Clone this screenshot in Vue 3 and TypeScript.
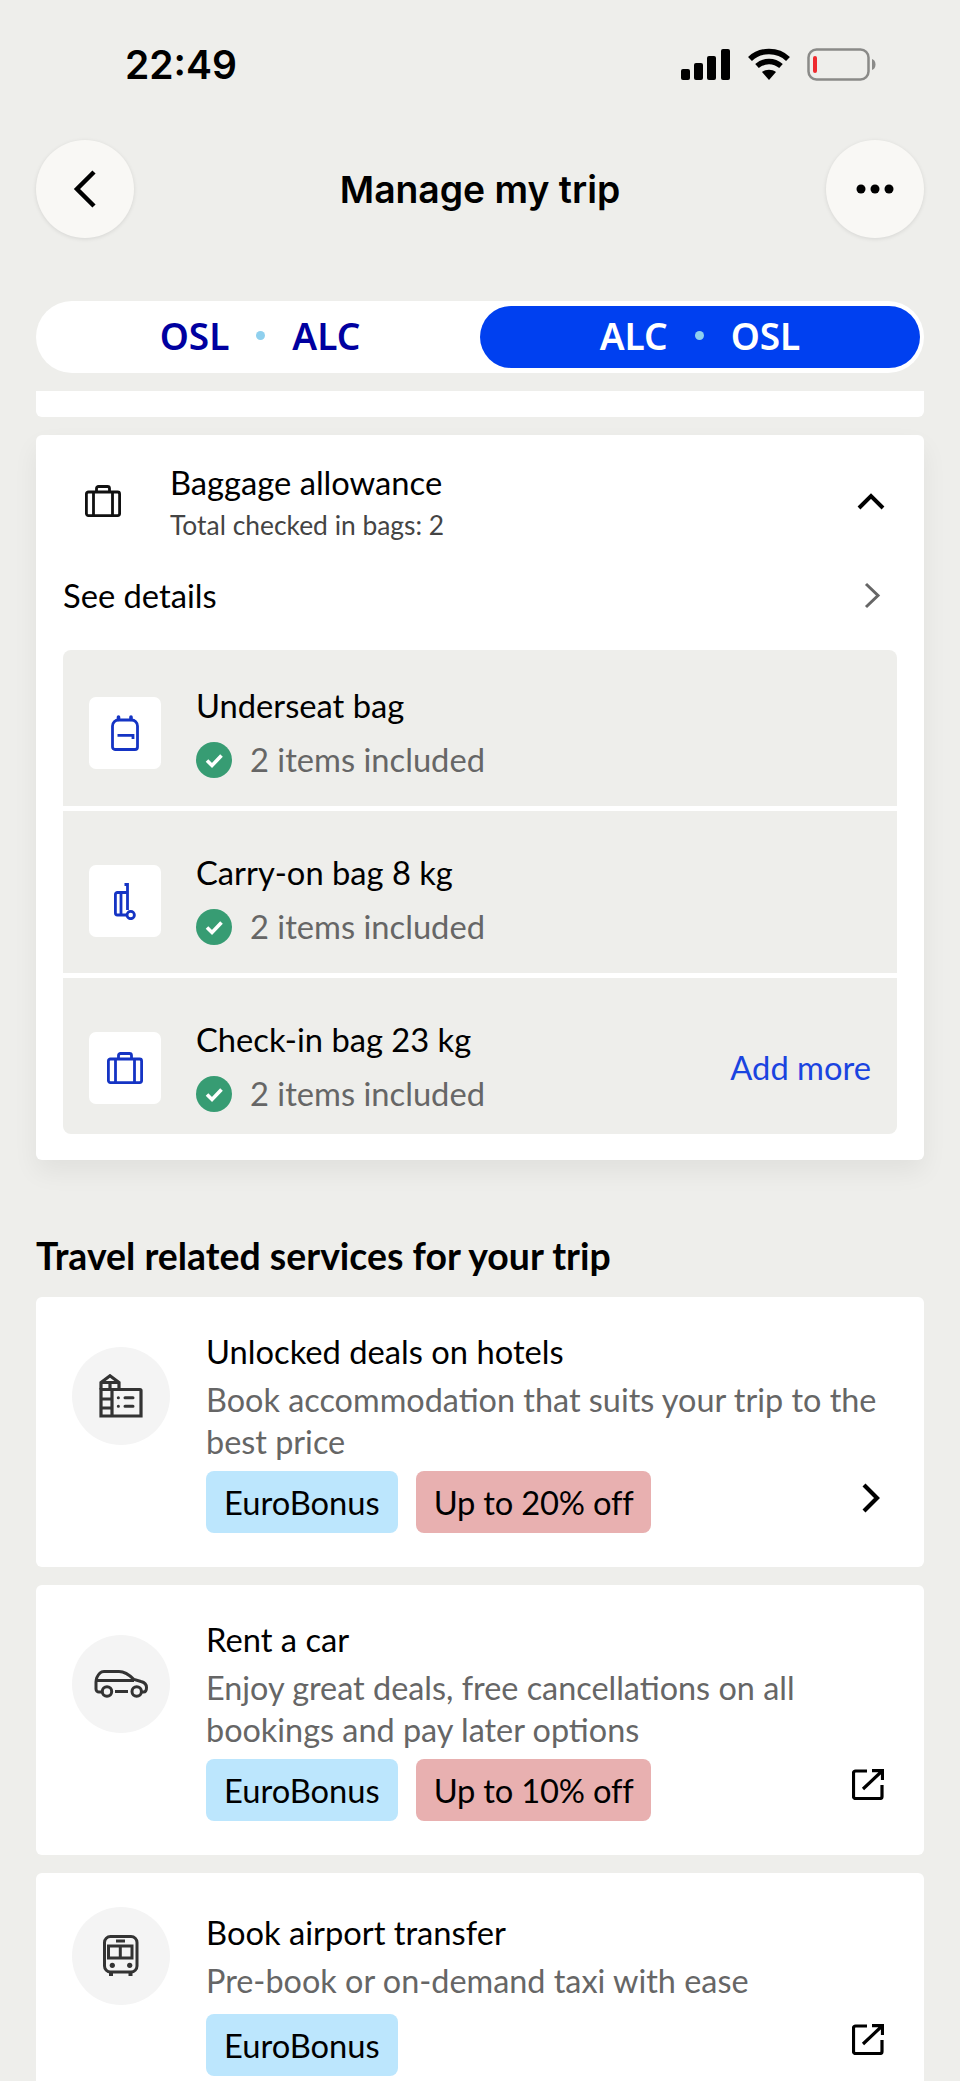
<script setup lang="ts">
interface Bag {
  name: string;
  icon: "backpack" | "trolley" | "case";
  addMore?: boolean;
}

interface Service {
  title: string;
  lines: string[];
  icon: "hotel" | "car" | "bus";
  deal?: string;
  action: "chevron" | "external";
}

const bags: Bag[] = [
  { name: "Underseat bag", icon: "backpack" },
  { name: "Carry-on bag 8 kg", icon: "trolley" },
  { name: "Check-in bag 23 kg", icon: "case", addMore: true },
];

const services: Service[] = [
  {
    title: "Unlocked deals on hotels",
    lines: ["Book accommodation that suits your trip to the", "best price"],
    icon: "hotel",
    deal: "Up to 20% off",
    action: "chevron",
  },
  {
    title: "Rent a car",
    lines: ["Enjoy great deals, free cancellations on all", "bookings and pay later options"],
    icon: "car",
    deal: "Up to 10% off",
    action: "external",
  },
  {
    title: "Book airport transfer",
    lines: ["Pre-book or on-demand taxi with ease"],
    icon: "bus",
    action: "external",
  },
];
</script>

<template>
  <div class="page">
    <div class="status">
      <span class="time">22:49</span>
      <div class="status-icons">
        <svg width="50" height="31" viewBox="0 0 50 31" fill="#000">
          <rect x="0" y="20" width="9" height="11" rx="2" />
          <rect x="13" y="14" width="9" height="17" rx="2" />
          <rect x="26" y="7" width="9" height="24" rx="2" />
          <rect x="40" y="0" width="9" height="31" rx="2" />
        </svg>
        <svg width="44" height="32" viewBox="0 0 44 32" fill="none" stroke="#000" stroke-width="5.5">
          <path d="M3 11C13 1 31 1 41 11" />
          <path d="M10 18c7-6 17-6 24 0" />
          <path d="M22 32l-7-8c4-3 10-3 14 0z" fill="#000" stroke="none" />
        </svg>
        <svg width="69" height="33" viewBox="0 0 69 33" fill="none">
          <rect x="1.5" y="1.5" width="60" height="30" rx="8" stroke="#8a8a88" stroke-width="2.5" />
          <rect x="6" y="8" width="4" height="17" rx="2" fill="#ee2a2f" />
          <path d="M65 11c2 .5 3.500 2.500 3.500 5.500s-1.500 5-3.500 5.500z" fill="#8a8a88" />
        </svg>
      </div>
    </div>

    <div class="nav">
      <button class="round">
        <svg width="26" height="38" viewBox="0 0 26 38" fill="none" stroke="#000" stroke-width="4.5">
          <path d="M22 2L5 19l17 17" />
        </svg>
      </button>
      <h1>Manage my trip</h1>
      <button class="round">
        <svg width="38" height="10" viewBox="0 0 38 10" fill="#000">
          <circle cx="5" cy="5" r="4.500" />
          <circle cx="19" cy="5" r="4.500" />
          <circle cx="33" cy="5" r="4.500" />
        </svg>
      </button>
    </div>

    <div class="segments">
      <div class="seg">OSL<i></i>ALC</div>
      <div class="seg seg--on">ALC<i></i>OSL</div>
    </div>

    <div class="strip"></div>

    <section class="baggage">
      <div class="bag-head">
        <svg class="bag-head__icon" width="36" height="32" viewBox="0 0 36 32" fill="none" stroke="#111" stroke-width="2.8">
          <rect x="1.400" y="7" width="33.200" height="23.600" rx="2" />
          <path d="M11.500 7V3.500a2 2 0 0 1 2-2h9a2 2 0 0 1 2 2V7M8.500 7v23.600M27.500 7v23.600" />
        </svg>
        <div class="bag-head__text">
          <div class="bag-head__title">Baggage allowance</div>
          <div class="bag-head__sub">Total checked in bags: 2</div>
        </div>
        <svg class="bag-head__toggle" width="28" height="18" viewBox="0 0 28 18" fill="none" stroke="#000" stroke-width="4">
          <path d="M2 16L14 4l12 12" />
        </svg>
      </div>

      <div class="details">
        <span>See details</span>
        <svg width="17" height="27" viewBox="0 0 17 27" fill="none" stroke="#666" stroke-width="3">
          <path d="M2 2l12 11.500L2 25" />
        </svg>
      </div>

      <div class="bag-list">
        <div v-for="bag in bags" :key="bag.name" class="bag">
          <div class="tile">
            <svg v-if="bag.icon === 'backpack'" width="28" height="36" viewBox="0 0 28 36" fill="none" stroke="#1534c4" stroke-width="2.800">
              <path d="M1.500 11a6 6 0 0 1 6-6h13a6 6 0 0 1 6 6v21a2.500 2.500 0 0 1-2.500 2.500H4A2.500 2.500 0 0 1 1.500 32z" />
              <path d="M7.500 4.500V2M20 4.500V2" stroke-width="3.600" stroke-linecap="round" />
              <path d="M6.500 20.300H22V24" />
            </svg>
            <svg v-else-if="bag.icon === 'trolley'" width="22" height="37" viewBox="0 0 22 37" fill="none" stroke="#1534c4" stroke-width="2.800">
              <path d="M13.300 9.500H3.400a2 2 0 0 0-2 2V30a2 2 0 0 0 2 2H13" />
              <path d="M7 9.500V32" />
              <path d="M10.500 1.500h3V27" />
              <circle cx="16.700" cy="32" r="3.700" />
            </svg>
            <svg v-else width="36" height="32" viewBox="0 0 36 32" fill="none" stroke="#1534c4" stroke-width="2.800">
              <rect x="1.400" y="7" width="33.200" height="23.600" rx="2" />
              <path d="M11.500 7V3.500a2 2 0 0 1 2-2h9a2 2 0 0 1 2 2V7M8.500 7v23.600M27.500 7v23.600" />
            </svg>
          </div>
          <div class="bag__text">
            <div class="bag__name">{{ bag.name }}</div>
            <div class="bag__items">
              <svg width="36" height="36" viewBox="0 0 36 36">
                <circle cx="18" cy="18" r="18" fill="#379c73" />
                <path d="M11 18.500l5 5 9.500-10" fill="none" stroke="#fff" stroke-width="3.600" />
              </svg>
              2 items included
            </div>
          </div>
          <a v-if="bag.addMore" class="add-more">Add more</a>
        </div>
      </div>
    </section>

    <h2>Travel related services for your trip</h2>

    <div class="services">
      <article v-for="s in services" :key="s.title" class="service" :class="`service--${s.icon}`">
        <div class="service__badge">
          <svg v-if="s.icon === 'hotel'" width="44" height="44" viewBox="0 0 44 44" fill="none" stroke="#333" stroke-width="3.200">
            <path d="M2 15.500V8.500L11 1.800l9 6.700v7" />
            <path d="M2 15.500h39a1 1 0 0 1 1 1V42H2z" />
            <path d="M2 8.500h18M11 8.500v7M13 15.500V42M2 25h11M2 34h11" />
            <path d="M19.300 23.700h.1M19.300 32.300h.1M26 23.700h8M26 32.300h8" stroke-width="3" stroke-linecap="round" />
          </svg>
          <svg v-else-if="s.icon === 'car'" width="54" height="28" viewBox="0 0 54 28" fill="none" stroke="#333" stroke-width="3">
            <path d="M8 22H5a3 3 0 0 1-3-3v-7c0-3 2-7 4-9 1-1 2-1.500 4-1.500h15c5 0 10 3 15 8l7 2c4 1 5.500 3 5.500 6 0 3-1 4.500-3 4.500h-2" />
            <path d="M3 10.500h37" />
            <circle cx="13" cy="21.500" r="4.700" />
            <circle cx="42.700" cy="21.500" r="4.700" />
            <path d="M21 21.500h13" />
          </svg>
          <svg v-else width="36" height="42" viewBox="0 0 36 42" fill="none" stroke="#333" stroke-width="3">
            <rect x="1.500" y="1.500" width="32.500" height="35.500" rx="6" />
            <path d="M5.500 11h23.500v12H5.500zM17.300 11v12M13 6h9" />
            <path d="M8 37v4M27.500 37v4" stroke-width="4" />
            <circle cx="9.300" cy="30.300" r="2.600" fill="#333" stroke="none" />
            <circle cx="26.700" cy="30.300" r="2.600" fill="#333" stroke="none" />
          </svg>
        </div>
        <div class="service__body">
          <div class="service__title">{{ s.title }}</div>
          <p class="service__desc">
            <span v-for="line in s.lines" :key="line">{{ line }}</span>
          </p>
          <div class="pills">
            <span class="pill pill--blue">EuroBonus</span>
            <span v-if="s.deal" class="pill pill--red">{{ s.deal }}</span>
          </div>
        </div>
        <svg v-if="s.action === 'chevron'" class="service__action service__action--chevron" width="18" height="30" viewBox="0 0 18 30" fill="none" stroke="#000" stroke-width="4.200">
          <path d="M2 2l13 13L2 28" />
        </svg>
        <svg v-else class="service__action" width="32" height="31" viewBox="0 0 32 31" fill="none" stroke="#000" stroke-width="3.200">
          <path d="M15 2H3.500a2 2 0 0 0-2 2v23.500a2 2 0 0 0 2 2H28a2 2 0 0 0 2-2V16" />
          <path d="M11 20L29 3M20 1.600h10.500V11" />
        </svg>
      </article>
    </div>
  </div>
</template>

<style>
html,
body {
  margin: 0;
  background: #eeeeeb;
}
</style>

<style scoped>
.page {
  height: 2081px;
  overflow: hidden;
  background: #eeeeeb;
  font-family: Lato, "Noto Sans", sans-serif;
  color: #000;
  font-size: 32.7px;
}

.status {
  display: flex;
  justify-content: space-between;
  align-items: center;
  height: 32px;
  padding: 48px 84px 0 125px;
}

.time {
  font-family: Inter, sans-serif;
  font-size: 39px;
  font-weight: 600;
}

.status-icons {
  display: flex;
  align-items: center;
  gap: 16px;
}

.nav {
  display: flex;
  justify-content: space-between;
  align-items: center;
  margin: 60px 36px 0;
}

.nav h1 {
  margin: 0;
  font-family: Inter, sans-serif;
  font-size: 37.3px;
  font-weight: 600;
}

.round {
  display: flex;
  align-items: center;
  justify-content: center;
  width: 98px;
  height: 98px;
  padding: 0;
  border: 0;
  border-radius: 50%;
  background: #f9f8f5;
  box-shadow: 0 1px 4px rgb(0 0 0 / 0.1);
}

.segments {
  display: grid;
  grid-template-columns: 440px 1fr;
  height: 62px;
  margin: 63px 36px 0;
  padding: 5px 4px;
  border-radius: 36px;
  background: #fff;
}

.seg {
  display: flex;
  align-items: center;
  justify-content: center;
  gap: 27px;
  padding-bottom: 4px;
  box-sizing: border-box;
  font-family: "Noto Sans", sans-serif;
  font-size: 37px;
  font-weight: 600;
  color: #0000a0;
  border-radius: 31px;
}

.seg i {
  width: 9px;
  height: 9px;
  border-radius: 50%;
  background: #8fd0ee;
}

.seg--on {
  background: #0040f0;
  color: #fff;
}

.strip {
  height: 26px;
  margin: 18px 36px 0;
  background: #fff;
  border-radius: 0 0 6px 6px;
}

.baggage {
  margin: 18px 36px 0;
  padding: 0 27px 27px;
  height: 725px;
  box-sizing: border-box;
  background: #fff;
  border-radius: 6px;
  box-shadow: 0 12px 26px rgb(0 0 0 / 0.06);
}

.bag-head {
  display: flex;
  align-items: center;
  padding: 26px 12px 0 22px;
}

.bag-head__icon {
  margin-top: -3px;
}

.bag-head__toggle {
  margin-top: -2px;
}

.bag-head__text {
  flex: 1;
  margin-left: 49px;
}

.bag-head__title {
  line-height: 44px;
}

.bag-head__sub {
  font-size: 26.4px;
  line-height: 36px;
  margin-top: 2px;
  color: #444;
}

.details {
  display: flex;
  justify-content: space-between;
  align-items: center;
  height: 44px;
  margin-top: 30px;
  padding-right: 16px;
}

.bag-list {
  margin-top: 33px;
  border-radius: 8px;
  overflow: hidden;
}

.bag {
  display: flex;
  align-items: flex-start;
  padding: 40px 26px 23px 26px;
  background: #eeeeeb;
  margin-bottom: 5px;
}

.bag:first-child {
  padding-top: 34px;
}

.bag:last-child {
  margin-bottom: 0;
  padding-bottom: 17px;
}

.tile {
  display: flex;
  align-items: center;
  justify-content: center;
  flex: none;
  width: 72px;
  height: 72px;
  margin-top: 14px;
  background: #fff;
  border-radius: 7px;
}

.bag:first-child .tile {
  margin-top: 13px;
}

.bag__text {
  margin-left: 35px;
}

.bag__name {
  line-height: 44px;
}

.bag__items {
  display: flex;
  align-items: center;
  gap: 18px;
  line-height: 46px;
  margin-top: 9px;
  color: #666;
}

.add-more {
  margin: 27px 0 0 auto;
  line-height: 46px;
  color: #1a44e0;
}

h2 {
  margin: 74px 36px 0;
  font-size: 37.4px;
  line-height: 44px;
  font-weight: 700;
}

.services {
  display: flex;
  flex-direction: column;
  gap: 18px;
  margin: 19px 36px 0;
}

.service {
  display: flex;
  align-items: flex-start;
  padding: 34px 40px 34px 36px;
  background: #fff;
  border-radius: 6px;
}

.service__badge {
  display: flex;
  align-items: center;
  justify-content: center;
  flex: none;
  width: 98px;
  height: 98px;
  margin-top: 16px;
  border-radius: 50%;
  background: #f4f4f4;
}

.service--bus .service__badge {
  margin-top: 0;
}

.service--bus .service__body {
  margin-top: 5px;
}

.service--bus .service__desc {
  margin-bottom: 12px;
}

.service__body {
  flex: 1;
  min-width: 0;
  margin-left: 36px;
}

.service__title {
  line-height: 42px;
}

.service__desc {
  margin: 6px 0 8px;
  font-size: 32.4px;
  line-height: 42px;
  color: #666;
  white-space: nowrap;
}

.service__desc span {
  display: block;
}

.pills {
  display: flex;
  gap: 18px;
}

.pill {
  display: flex;
  align-items: center;
  height: 62px;
  padding: 0 18px;
  border-radius: 8px;
}

.pill--blue {
  background: #bce6fd;
}

.pill--red {
  background: #e8b0b0;
  letter-spacing: -0.2px;
}

.service__action {
  align-self: flex-end;
  flex: none;
  margin-bottom: 21px;
}

.service__action--chevron {
  margin-bottom: 20px;
  margin-right: 4px;
}
</style>
